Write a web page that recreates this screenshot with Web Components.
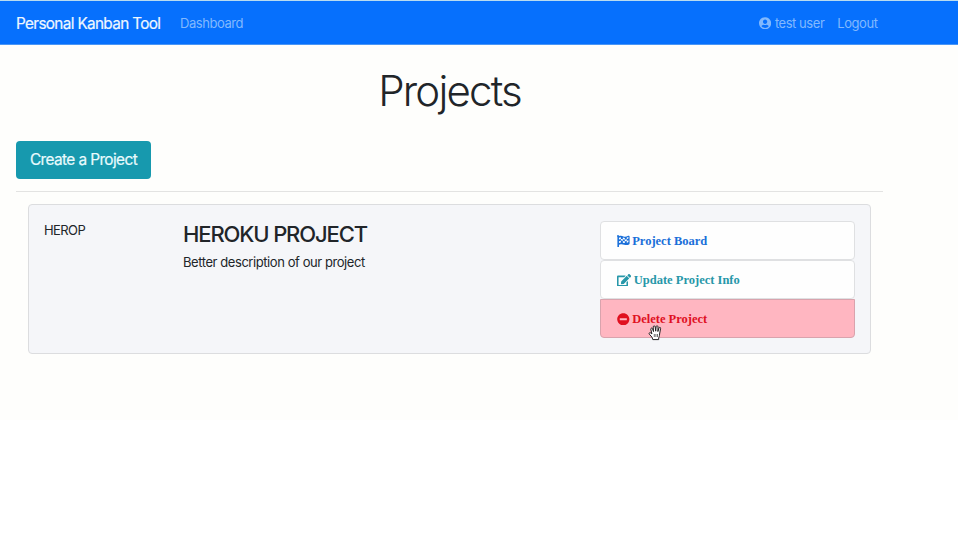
<!DOCTYPE html>
<html lang="en">
<head>
<meta charset="utf-8">
<title>Personal Kanban Tool</title>
<style>
html{background:#fff}
body{margin:0;height:420px;background:#fefefc;font-family:Inter,"Liberation Sans",sans-serif;color:#212529;overflow:hidden}
</style>
</head>
<body>
<kanban-app></kanban-app>
<script>
const ICONS = {
  user: ['0 0 496 512', '<path d="M248 8C111 8 0 119 0 256s111 248 248 248 248-111 248-248S385 8 248 8zm0 96c48.6 0 88 39.4 88 88s-39.4 88-88 88-88-39.4-88-88 39.4-88 88-88zm0 344c-58.7 0-111.3-26.6-146.5-68.2 18.8-35.4 55.6-59.8 98.5-59.8 2.4 0 4.8.4 7.1 1.1 13 4.2 26.6 6.9 40.9 6.9 14.3 0 28-2.7 40.9-6.9 2.3-.7 4.7-1.1 7.1-1.1 42.9 0 79.7 24.4 98.5 59.8C359.3 421.4 306.7 448 248 448z"/>'],
  minus: ['0 0 512 512', '<path d="M256 8C119 8 8 119 8 256s111 248 248 248 248-111 248-248S393 8 256 8zM124 296c-6.6 0-12-5.4-12-12v-56c0-6.6 5.4-12 12-12h264c6.6 0 12 5.4 12 12v56c0 6.6-5.4 12-12 12H124z"/>'],
  edit: ['0 0 576 512', '<path d="M402.6 83.2l90.2 90.2c3.8 3.8 3.8 10 0 13.8L274.4 405.6l-92.8 10.3c-12.4 1.4-22.9-9.1-21.5-21.5l10.3-92.8L388.8 83.2c3.8-3.8 10-3.8 13.8 0zm162-22.9l-48.8-48.8c-15.2-15.2-39.9-15.2-55.2 0l-35.4 35.4c-3.8 3.8-3.8 10 0 13.8l90.2 90.2c3.8 3.8 10 3.8 13.8 0l35.4-35.4c15.2-15.3 15.2-40 0-55.2zM384 346.2V448H64V128h229.8c3.2 0 6.2-1.3 8.5-3.5l40-40c7.6-7.6 2.2-20.5-8.5-20.5H48C21.5 64 0 85.5 0 112v352c0 26.5 21.5 48 48 48h352c26.5 0 48-21.5 48-48V306.2c0-10.7-12.9-16-20.5-8.5l-40 40c-2.2 2.3-3.5 5.3-3.5 8.5z"/>'],
  flag: ['0 0 512 512', '<path fill-rule="evenodd" d="M40 0a38 38 0 0 1 35 52c70-34 130-15 190 5 65 20 115 10 185-24 28-12 62 0 62 35v280c0 18-8 29-22 36-130 72-220-28-335-8-30 5-51 12-75 24v88c0 13-11 24-24 24H40c-13 0-24-11-24-24V72A40 40 0 0 1 40 0zM80 112v68c30-12 50-18 78-21V92c-30 3-50 9-78 20zM158 159v70c32-3 52 3 80 12v-70c-32-10-50-14-80-12zM238 103v68c30 9 50 14 80 14v-68c-30 0-50-5-80-14zM318 185v70c30 0 52-5 80-15v-70c-30 9-50 15-80 15zM398 103v67c25-8 44-16 66-27V78c-22 11-42 19-66 25zM80 252v70c30-13 50-19 78-22v-71c-28 4-50 11-78 23zM238 241v70c30 10 50 16 80 17v-73c-30 0-50-5-80-14zM398 240v71c26-5 48-13 66-26v-70c-22 11-42 20-66 25z"/>']
};

function define(name, css, html) {
  customElements.define(name, class extends HTMLElement {
    constructor() {
      super();
      this.attachShadow({ mode: 'open' }).innerHTML = `<style>${css}</style>${html}`;
    }
  });
}

customElements.define('ui-icon', class extends HTMLElement {
  connectedCallback() {
    const [box, shape] = ICONS[this.getAttribute('name')];
    const root = this.shadowRoot || this.attachShadow({ mode: 'open' });
    root.innerHTML = `<style>:host{display:inline-flex;flex:none}svg{height:12.6px;width:auto;display:block}</style>
      <svg viewBox="${box}" fill="currentColor">${shape}</svg>`;
  }
});

define('nav-link', `:host{display:flex;align-items:center;gap:3.5px;font-size:13px;color:#82b9fd;white-space:nowrap;letter-spacing:-.45px}`, `<slot></slot>`);

define('nav-bar', `
  :host{display:flex;align-items:center;box-sizing:border-box;height:45px;padding:1px 80.5px 0 16px;background:#0670fd;border-top:1px solid #b9dcf0;border-bottom:1px solid #4a96f5}
  .brand{font-size:15.3px;color:#eef7ff;letter-spacing:-.65px;width:164px;white-space:nowrap;-webkit-text-stroke:.2px #eef7ff}
  .right{margin-left:auto;display:flex;gap:13px}`, `
  <div class="brand">Personal Kanban Tool</div>
  <nav-link>Dashboard</nav-link>
  <div class="right"><nav-link><ui-icon name="user"></ui-icon><span>test user</span></nav-link><nav-link>Logout</nav-link></div>`);

define('create-button', `
  :host{display:flex;box-sizing:border-box;width:135px;height:38px;padding-bottom:1px;align-items:center;justify-content:center;border-radius:4px;background:#1799ae;color:#e9fbfd;font-size:15.4px;letter-spacing:-.6px;white-space:nowrap;-webkit-text-stroke:.2px #e9fbfd}`, `<slot></slot>`);

define('action-item', `
  :host{display:flex;align-items:center;gap:2.6px;box-sizing:border-box;height:39px;padding:1px 16px 0;background:#fefefe;border:1px solid #dfe0e2;border-radius:4px;font:bold 12.5px "Liberation Serif",serif;white-space:nowrap}
  :host([kind=board]){color:#1a6fd9}
  :host([kind=update]){color:#2797a9}
  :host([kind=delete]){color:#e0101f;background:#ffb6c1;border-color:#d9a3ad;border-radius:0 0 4px 4px}`, `<slot name="icon"></slot><slot></slot>`);

define('project-card', `
  :host{display:grid;grid-template-columns:139px 417px 255px;box-sizing:border-box;height:150px;margin:0 12px;padding:16px 15px 0;background:#f5f6f9;border:1px solid #dcdddf;border-radius:4px}
  .key{font-size:13px;line-height:18px}
  h3{margin:0 0 4px;font-size:22px;line-height:26px;font-weight:500}
  .actions{display:flex;flex-direction:column}
  slot{white-space:nowrap}`, `
  <div class="key"><slot name="key"></slot></div>
  <div><h3><slot name="title"></slot></h3><slot name="text"></slot></div>
  <div class="actions"><slot name="actions"></slot></div>`);

define('pointer-hand', `:host{position:absolute;left:647.5px;top:325px}svg{display:block}`, `
  <svg width="15" height="16" viewBox="0 0 15 16"><path d="M4.8 14.6 4 12.2 1.3 9.2C.6 8.2 1.6 7.2 2.7 7.9l1.2 1L2.8 4.3c-.2-1.3 1.3-1.7 1.8-.5l.9 2.8L5.2 2c0-1.4 1.7-1.5 2-.2l.5 4.4.4-4.6c.2-1.2 1.8-1.1 1.9.2L9.9 6.5l1.1-3.6c.4-1 1.8-.7 1.6.5l-1 5.6c-.1 2.2-.6 3-.9 3.8v1.8z" fill="#fff" stroke="#222" stroke-width="1"/><path d="M6.3 9v3M7.9 9v3M9.5 9v3" stroke="#333" stroke-width=".7"/></svg>`);

define('kanban-app', `
  :host{display:block}
  main{padding:0 75px 0 16px}
  h1{margin:19px 0 0;height:54px;line-height:54px;font-size:42px;font-weight:300;text-align:center;letter-spacing:-1.8px}
  create-button{margin-top:23px}
  hr{height:1px;border:0;background:#e3e3e2;margin:12px 0}
  .key{letter-spacing:-.6px}
  .title{letter-spacing:-1.13px}
  .text{font-size:13px;line-height:20px;letter-spacing:-.43px}`, `
  <nav-bar></nav-bar>
  <main>
    <h1>Projects</h1>
    <create-button>Create a Project</create-button>
    <hr>
    <project-card>
      <span slot="key" class="key">HEROP</span>
      <span slot="title" class="title">HEROKU PROJECT</span>
      <span slot="text" class="text">Better description of our project</span>
      <action-item slot="actions" kind="board"><ui-icon slot="icon" name="flag"></ui-icon><span>Project Board</span></action-item>
      <action-item slot="actions" kind="update"><ui-icon slot="icon" name="edit"></ui-icon><span>Update Project Info</span></action-item>
      <action-item slot="actions" kind="delete"><ui-icon slot="icon" name="minus"></ui-icon><span>Delete Project</span></action-item>
    </project-card>
  </main>
  <pointer-hand></pointer-hand>`);
</script>
</body>
</html>
